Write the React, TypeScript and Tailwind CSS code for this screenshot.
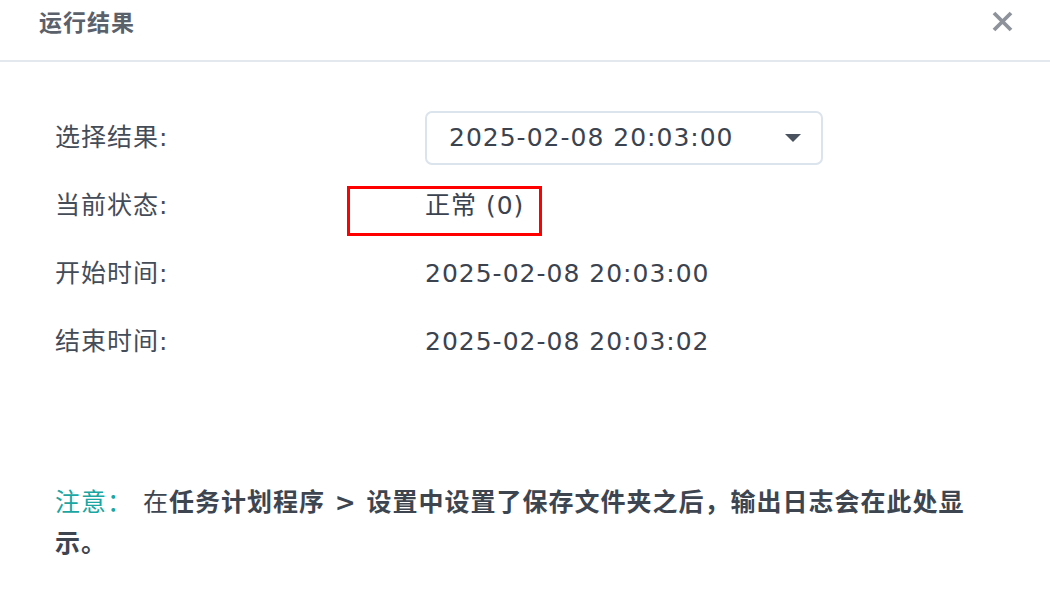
const font = {
  fontFamily: '"DejaVu Sans", "Noto Sans CJK SC", sans-serif',
};

const rows = [
  { label: "当前状态:", value: "正常 (0)" },
  { label: "开始时间:", value: "2025-02-08 20:03:00" },
  { label: "结束时间:", value: "2025-02-08 20:03:02" },
];

function Close() {
  return (
    <svg width="21" height="21" viewBox="0 0 21 21">
      <path d="M2 2 L19 19 M19 2 L2 19" stroke="#8e939b" strokeWidth="3.8" />
    </svg>
  );
}

function Caret() {
  return (
    <svg width="16" height="8" viewBox="0 0 16 8">
      <path d="M0 0 H16 L8 8 Z" fill="#4a5260" />
    </svg>
  );
}

export default function App() {
  return (
    <div
      className="relative w-[1050px] h-[590px] bg-white overflow-hidden"
      style={font}
    >
      {/* header */}
      <div className="h-[62px] border-b-2 border-[#e3e8ef] flex items-start justify-between pl-[39px] pr-[37px] pt-[9px]">
        <h1 className="text-[23px] leading-[28px] font-bold text-[#5a616b] tracking-[1px]">
          运行结果
        </h1>
        <div className="pt-[2px]">
          <Close />
        </div>
      </div>

      {/* form */}
      <div className="pt-[49px] pl-[55px] flex flex-col gap-[14px] text-[25px] tracking-[1px]">
        <div className="flex items-center h-[54px]">
          <div className="w-[370px] text-[#444c58]">选择结果:</div>
          <div className="w-[398px] h-[54px] border-2 border-[#dbe3ec] rounded-[7px] flex items-center justify-between pl-[22px] pr-[20px] text-[#3b4350]">
            <span>2025-02-08 20:03:00</span>
            <Caret />
          </div>
        </div>
        {rows.map((r) => (
          <div key={r.label} className="flex items-center h-[54px]">
            <div className="w-[370px] text-[#444c58]">{r.label}</div>
            <div className="text-[#3b4350]">{r.value}</div>
          </div>
        ))}
      </div>

      {/* note */}
      <p className="mt-[113px] pl-[55px] w-[975px] text-[25px] leading-[41px] tracking-[1px] text-[#3d4550]">
        <span className="text-[#1aa6a2] mr-[10px]">注意：</span>
        <span>在</span>
        <span className="font-bold">任务计划程序 &gt; 设置中设置了保存文件夹之后，输出日志会在此处显示。</span>
      </p>

      {/* annotation box */}
      <div className="absolute left-[347px] top-[186px] w-[195px] h-[50px] border-[3px] border-[#ff0000]" />
    </div>
  );
}
